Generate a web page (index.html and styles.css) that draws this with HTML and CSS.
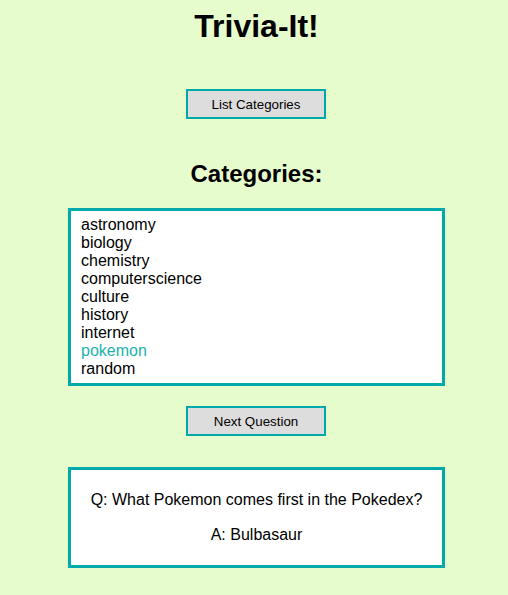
FILE: index.html
```html
<!DOCTYPE html>
<html lang="en">
<head>
  <meta charset="UTF-8">
  <title>Trivia-It!</title>
  <link rel="stylesheet" href="styles.css">
</head>
<body>
  <h1>Trivia-It!</h1>

  <div class="actions">
    <button class="btn">List Categories</button>
  </div>

  <h2>Categories:</h2>

  <ul class="category-list">
    <li>astronomy</li>
    <li>biology</li>
    <li>chemistry</li>
    <li>computerscience</li>
    <li>culture</li>
    <li>history</li>
    <li>internet</li>
    <li class="selected">pokemon</li>
    <li>random</li>
  </ul>

  <div class="actions next">
    <button class="btn">Next Question</button>
  </div>

  <div class="question-box">
    <p>Q: What Pokemon comes first in the Pokedex?</p>
    <p>A: Bulbasaur</p>
  </div>
</body>
</html>
```

FILE: styles.css
```css
:root {
  --bg: #e6fccd;
  --teal: #00aaaa;
  --teal-light: #20b2aa;
}

body {
  margin: 8px 5px 8px 10px;
  background-color: var(--bg);
  font-family: 'Liberation Sans', Arial, sans-serif;
  color: #000;
}

h1 {
  margin: 0;
  font-size: 32px;
  text-align: center;
}

h2 {
  margin: 41px 0 20px;
  font-size: 24px;
  text-align: center;
}

.actions {
  display: flex;
  justify-content: center;
  margin-top: 44px;
}

.actions.next {
  margin-top: 20px;
}

.btn {
  width: 140px;
  height: 30px;
  margin-right: 1px;
  background-color: #dddddd;
  border: 2px solid var(--teal);
  font-family: inherit;
  font-size: 13.33px;
  color: #000;
  cursor: pointer;
}

.category-list {
  list-style: none;
  width: 377px;
  box-sizing: border-box;
  margin: 0 auto;
  padding: 5px 10px 5px;
  background-color: #fff;
  border: 3px solid var(--teal);
  font-size: 16px;
}

.category-list .selected {
  color: var(--teal-light);
}

.question-box {
  width: 377px;
  box-sizing: border-box;
  margin: 31px auto 0;
  padding: 4px 10px 4px;
  background-color: #fff;
  border: 3px solid var(--teal);
  text-align: center;
  font-size: 16px;
}

.question-box p {
  margin: 17px 0;
}
```
